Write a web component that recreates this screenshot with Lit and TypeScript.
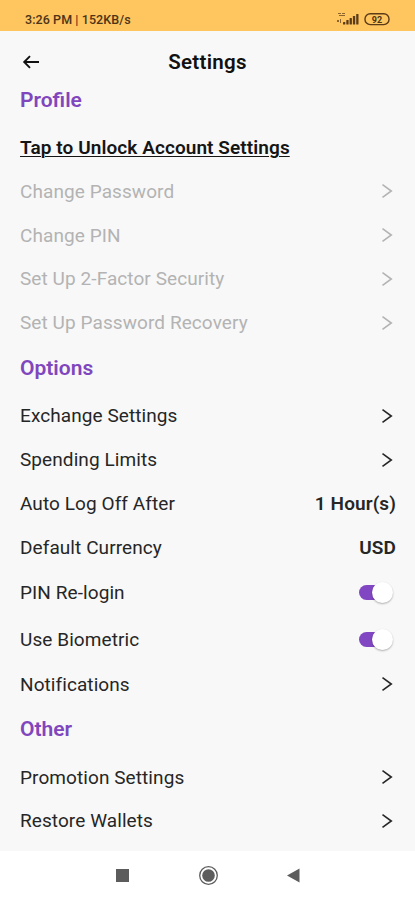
import { LitElement, html, css, svg } from "lit";
import { customElement } from "lit/decorators.js";
import { classMap } from "lit/directives/class-map.js";

type Row = { label: string; value?: string; toggle?: boolean; disabled?: boolean; link?: boolean };
type Section = { title: string; rows: Row[] };

const sections: Section[] = [
  {
    title: "Profile",
    rows: [
      { label: "Tap to Unlock Account Settings", link: true },
      { label: "Change Password", disabled: true },
      { label: "Change PIN", disabled: true },
      { label: "Set Up 2-Factor Security", disabled: true },
      { label: "Set Up Password Recovery", disabled: true },
    ],
  },
  {
    title: "Options",
    rows: [
      { label: "Exchange Settings" },
      { label: "Spending Limits" },
      { label: "Auto Log Off After", value: "1 Hour(s)" },
      { label: "Default Currency", value: "USD" },
      { label: "PIN Re-login", toggle: true },
      { label: "Use Biometric", toggle: true },
      { label: "Notifications" },
    ],
  },
  {
    title: "Other",
    rows: [{ label: "Promotion Settings" }, { label: "Restore Wallets" }],
  },
];

@customElement("app-root")
export class AppRoot extends LitElement {
  static styles = css`
    :host { display: flex; flex-direction: column; height: 900px; overflow: hidden; background: #f8f8f8; color: #262626; font-family: Roboto, sans-serif; }
    .status { height: 31px; flex: none; box-sizing: border-box; background: #ffc55f; color: #4c3418; display: flex; justify-content: space-between; padding: 9px 23px 0 25px; font-size: 12.5px; line-height: 22px; font-weight: 500; letter-spacing: 0.08px; }
    .status-icons { display: block; margin-top: 1px; }
    .header { height: 45.9px; flex: none; box-sizing: border-box; display: grid; grid-template-columns: 60px 1fr 60px; align-items: center; padding-top: 16px; }
    .back { display: block; margin-left: 22px; }
    .title { text-align: center; font-size: 20.5px; line-height: 24px; font-weight: 600; color: #111; letter-spacing: 0.3px; }
    .content { flex: 1; min-height: 0; }
    .heading { height: 49.3px; box-sizing: border-box; padding: 0 20px 3.3px; display: flex; align-items: center; font-size: 21px; font-weight: 600; color: #8046bd; }
    .row { height: 43.8px; box-sizing: border-box; padding: 0 19px 1px 20px; display: flex; align-items: center; justify-content: space-between; font-size: 19px; letter-spacing: 0.08px; white-space: nowrap; }
    .row.toggle { height: 46.5px; padding-right: 21px; padding-bottom: 0; }
    .row.disabled { color: #b3b3b3; }
    .row.link { font-weight: 600; color: #151515; text-decoration: underline; text-decoration-thickness: 1px; text-underline-offset: 2px; }
    .value { font-weight: 600; letter-spacing: 0.1px; }
    .chevron { display: block; margin-right: 3px; }
    .switch { display: flex; align-items: center; padding-right: 1px; }
    .track { width: 24px; height: 15px; border-radius: 8px 0 0 8px; background: #8147c2; }
    .thumb { width: 21px; height: 21px; margin-left: -11px; border-radius: 50%; background: #fff; box-shadow: 0 1px 2px rgba(0, 0, 0, 0.3); }
    .nav { height: 49px; flex: none; background: #fff; display: flex; justify-content: center; }
  `;

  private chevron() {
    return html`<svg class="chevron" width="12" height="16" viewBox="0 0 12 16" fill="none" stroke="currentColor" stroke-width="1.6"><path d="M1.5 1.6L10.3 8L1.5 14.4" /></svg>`;
  }

  private row(r: Row) {
    const end = r.link ? "" : r.value ? html`<span class="value">${r.value}</span>`
      : r.toggle ? html`<div class="switch"><div class="track"></div><div class="thumb"></div></div>`
      : this.chevron();
    return html`<div class=${classMap({ row: true, toggle: !!r.toggle, disabled: !!r.disabled, link: !!r.link })}><span>${r.label}</span>${end}</div>`;
  }

  render() {
    return html`
      <div class="status">
        <span>3:26 PM | 152KB/s</span>
        <svg class="status-icons" width="56" height="18" viewBox="0 0 56 18">
          <g fill="#5b3b18">
            <path d="M2 3h3v1H2zM6 3h3v1H6zM3 5h6v1H3zM1 10h2v2H1zM4 9h1v4H4z" opacity=".7" />
            ${[0, 1, 2, 3, 4].map((i) => svg`<rect x=${7 + i * 3.3} y=${12 - i * 2} width="2.3" height=${2.5 + i * 2} rx=".5" />`)}
          </g>
          <rect x="29" y="3.8" width="24" height="10.8" rx="5.2" fill="none" stroke="#5b3b18" stroke-width="1.4" />
          <text x="41" y="12.5" font-size="9" font-weight="700" text-anchor="middle" fill="#4c3418">92</text>
        </svg>
      </div>
      <div class="header">
        <svg class="back" width="18" height="14" viewBox="0 0 18 14" fill="none" stroke="#111" stroke-width="1.9"><path d="M17 7H2.3M8 1.2L2.2 7L8 12.8" /></svg>
        <div class="title">Settings</div>
      </div>
      <div class="content">
        ${sections.map((s) => html`<div class="heading">${s.title}</div>${s.rows.map((r) => this.row(r))}`)}
      </div>
      <div class="nav">
        <svg width="200" height="49" viewBox="0 0 200 49" fill="#5c5c5c">
          <rect x="8" y="18" width="13" height="13" />
          <circle cx="100.5" cy="24.5" r="6.3" />
          <circle cx="100.5" cy="24.5" r="8.8" fill="none" stroke="#5c5c5c" stroke-width="1.3" />
          <path d="M179 24.5L191.5 17.5V31.5Z" />
        </svg>
      </div>
    `;
  }
}
